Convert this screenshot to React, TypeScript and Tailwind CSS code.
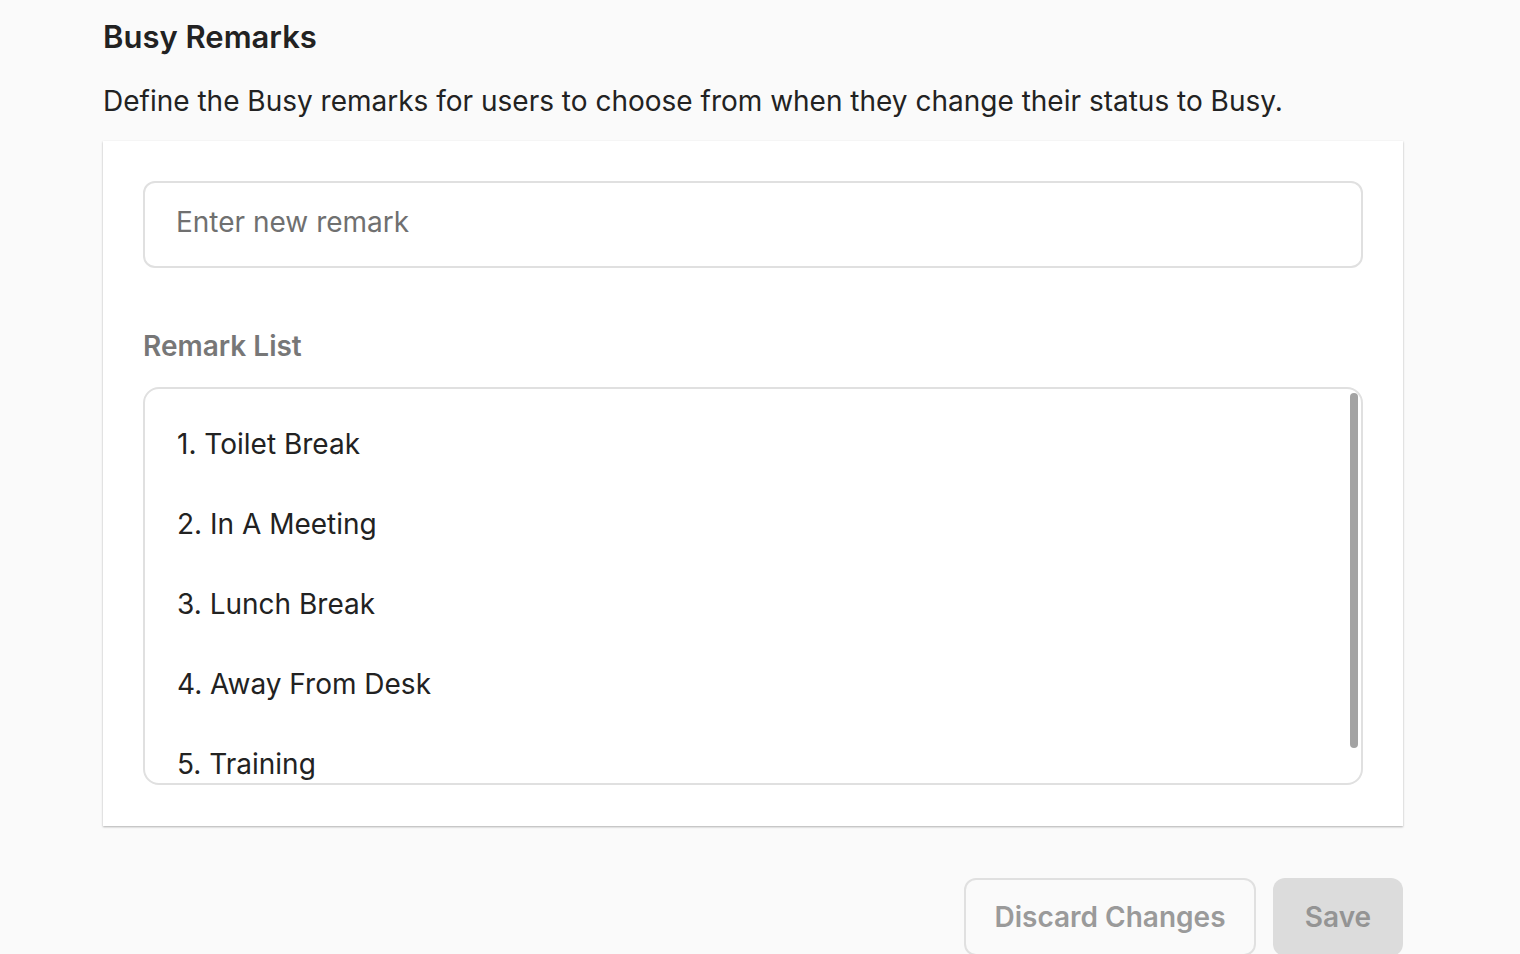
import React from 'react';

const remarks = ['Toilet Break', 'In A Meeting', 'Lunch Break', 'Away From Desk', 'Training'];

export default function App() {
  return (
    <div className="min-h-screen bg-[#fafafa] pl-[103px] pt-[19px] font-['Inter',sans-serif] text-[#222]">
      <div className="w-[1300px]">
        {/* Header */}
        <h1 className="text-[31px] leading-[36px] font-semibold">Busy Remarks</h1>
        <p className="mt-[28px] text-[28px] leading-[36px] text-[#222]">
          Define the Busy remarks for users to choose from when they change their status to Busy.
        </p>

        {/* Card */}
        <div className="mt-[22px] bg-white px-[40px] pt-[40px] pb-[41px] shadow-[0_1px_2px_rgba(0,0,0,0.3)]">
          <input
            type="text"
            placeholder="Enter new remark"
            className="block h-[87px] w-full rounded-[12px] border-2 border-[#e0e0e0] bg-white px-[31px] pb-[5px] text-[28px] text-[#222] outline-none placeholder:text-[#707070]"
          />

          <div className="mt-[60px] text-[28px] leading-[36px] font-semibold text-[#777]">Remark List</div>

          <div className="relative mt-[23px] h-[398px] overflow-hidden rounded-[16px] border-2 border-[#e0e0e0] bg-white">
            <ul className="pt-[15px] pl-[32px]">
              {remarks.map((r, i) => (
                <li key={r} className="text-[28px] leading-[80px] text-[#222]">
                  {i + 1}. {r}
                </li>
              ))}
            </ul>
            {/* scrollbar thumb */}
            <div className="absolute top-[4px] right-[3px] h-[355px] w-[8px] rounded-full bg-[#a3a3a3]" />
          </div>
        </div>

        {/* Actions */}
        <div className="mt-[52px] flex justify-end gap-[17px]">
          <button className="h-[78px] w-[292px] rounded-[12px] border-2 border-[#e0e0e0] bg-[#fafafa] text-[28px] font-semibold text-[#9a9a9a]">
            Discard Changes
          </button>
          <button className="h-[78px] w-[130px] rounded-[12px] bg-[#dcdcdc] text-[28px] font-semibold text-[#949494]">
            Save
          </button>
        </div>
      </div>
    </div>
  );
}
